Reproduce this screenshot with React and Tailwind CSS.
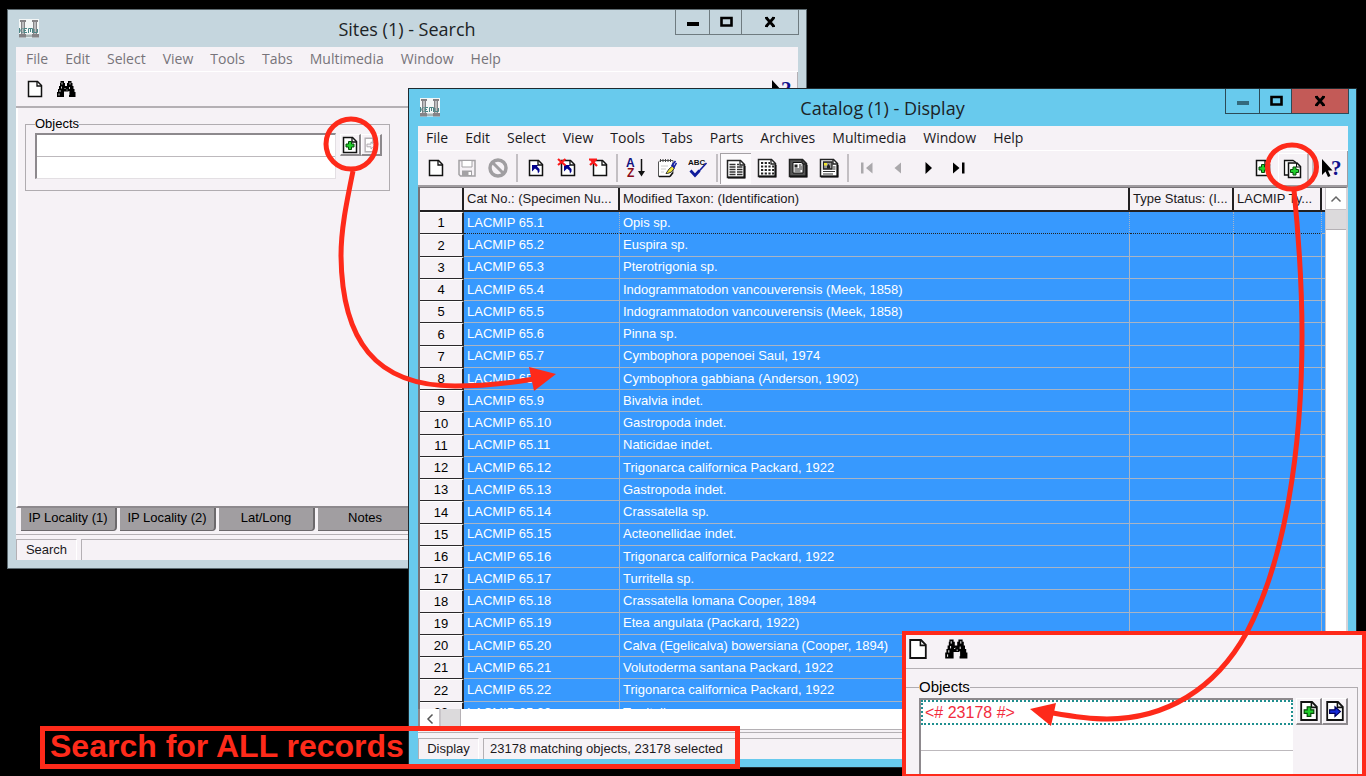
import React from 'react';

const records = [
  ['LACMIP 65.1', 'Opis sp.'],
  ['LACMIP 65.2', 'Euspira sp.'],
  ['LACMIP 65.3', 'Pterotrigonia sp.'],
  ['LACMIP 65.4', 'Indogrammatodon vancouverensis (Meek, 1858)'],
  ['LACMIP 65.5', 'Indogrammatodon vancouverensis (Meek, 1858)'],
  ['LACMIP 65.6', 'Pinna sp.'],
  ['LACMIP 65.7', 'Cymbophora popenoei Saul, 1974'],
  ['LACMIP 65.8', 'Cymbophora gabbiana (Anderson, 1902)'],
  ['LACMIP 65.9', 'Bivalvia indet.'],
  ['LACMIP 65.10', 'Gastropoda indet.'],
  ['LACMIP 65.11', 'Naticidae indet.'],
  ['LACMIP 65.12', 'Trigonarca californica Packard, 1922'],
  ['LACMIP 65.13', 'Gastropoda indet.'],
  ['LACMIP 65.14', 'Crassatella sp.'],
  ['LACMIP 65.15', 'Acteonellidae indet.'],
  ['LACMIP 65.16', 'Trigonarca californica Packard, 1922'],
  ['LACMIP 65.17', 'Turritella sp.'],
  ['LACMIP 65.18', 'Crassatella lomana Cooper, 1894'],
  ['LACMIP 65.19', 'Etea angulata (Packard, 1922)'],
  ['LACMIP 65.20', 'Calva (Egelicalva) bowersiana (Cooper, 1894)'],
  ['LACMIP 65.21', 'Volutoderma santana Packard, 1922'],
  ['LACMIP 65.22', 'Trigonarca californica Packard, 1922'],
  ['LACMIP 65.23', 'Turritella sp.'],
];

/* ---------- icons ---------- */

function Svg({ children, className = 'h-5 w-5', box = '0 0 20 20' }) {
  return (
    <svg className={`block shrink-0 ${className}`} viewBox={box} fill="none" aria-hidden="true">
      {children}
    </svg>
  );
}

const Sheet = ({ stroke = '#111' }) => (
  <>
    <path d="M3.5 2.5h9l4 4v11h-13z" fill="#fff" stroke={stroke} strokeWidth="1.5" />
    <path d="M12 2.5v4.500h4.500" stroke={stroke} strokeWidth="1.300" />
  </>
);

const NewIcon = ({ className }) => <Svg className={className}><Sheet /></Svg>;

const BinocularsIcon = ({ className }) => (
  <Svg className={className}>
    <path d="M4.500 2h3.500v2h1v3h2V4h1V2h3.500v2h1v3h1v3h1v3h1v5h-6.500v-5.500h-5V18H1v-5h1v-3h1V7h1V4h.5z" fill="#000" />
    <path d="M6 3.500v2M14 3.500v2M5.500 7.500v2M4 11v2M3 14.500v2M13.500 8v2M13 12v4M8.500 10l1-1M10.500 11h1" stroke="#fff" strokeWidth=".8" />
  </Svg>
);

const SaveIcon = () => (
  <Svg>
    <path d="M2 2.500h16v15.500H3.500L2 16.500z" stroke="#a3a1a4" strokeWidth="1.500" />
    <path d="M5 2.500h10v6.500H5z" fill="#fff" stroke="#a3a1a4" />
    <path d="M5 12.500h10V18H5z" fill="#a3a1a4" />
    <path d="M11.500 14h2.500v3h-2.500z" fill="#fff" />
  </Svg>
);

const BanIcon = () => (
  <Svg>
    <circle cx="10" cy="10" r="8" stroke="#a09ea1" strokeWidth="3.500" />
    <path d="M5 5l10 10" stroke="#a09ea1" strokeWidth="3" />
  </Svg>
);

const BlueArrow = () => (
  <path d="M6 7h6.500L11 8.500l2.500 2.500v2.500L12 15.500l-.5-3L9 10.500 6 13.500z" fill="#00008b" />
);
const RedCross = () => (
  <path d="M1 1l7.500 6.500M8.500 1L1 7" stroke="#fb1a1a" strokeWidth="2.200" />
);

const ViewAttachIcon = () => <Svg><Sheet /><BlueArrow /></Svg>;
const ClearAttachIcon = () => <Svg><g transform="translate(1)"><Sheet /><BlueArrow /></g><RedCross /></Svg>;
const DiscardIcon = () => (
  <Svg><g transform="translate(2)"><Sheet /></g><path d="M1 1.500h8M2 7l6-5.500M3 2l6 6" stroke="#fb1a1a" strokeWidth="2.200" /></Svg>
);

const SortIcon = () => (
  <Svg>
    <text x="0" y="9" fontSize="12" fontWeight="bold" fontFamily="Liberation Sans, sans-serif" fill="#101080">A</text>
    <text x="1" y="19" fontSize="12" fontWeight="bold" fontFamily="Liberation Sans, sans-serif" fill="#8b0a1a">Z</text>
    <path d="M15.500 1v14" stroke="#111" strokeWidth="1.500" />
    <path d="M12 13h7l-3.500 5.500z" fill="#111" />
  </Svg>
);

const NotesIcon = () => (
  <Svg>
    <path d="M3 2.500h13v12l-3.500 4H1.500V4z" fill="#fff" stroke="#555" />
    <path d="M2 18.500h11M13 18.500l3-4" stroke="#111" strokeWidth="1.500" />
    <path d="M3.500 1v3M6 1v3M8.500 1v3M11 1v3M13.500 1v3" stroke="#444" />
    <path d="M4 8h7M4 11h5M4 14h3" stroke="#ccc" />
    <path d="M9 15.500l3-4.500 3.500-3 2 2-3 4-4 1.500z" fill="#ede43a" stroke="#222" strokeWidth=".9" />
    <path d="M14.500 8l4-5M16.500 10l3-5M16 5v4" stroke="#1520a0" strokeWidth="1.500" />
  </Svg>
);

const SpellIcon = () => (
  <Svg>
    <text x="0" y="7" fontSize="8" fontWeight="bold" fontFamily="Liberation Sans, sans-serif" fill="#111">ABC</text>
    <path d="M7.500 17L18.500 5" stroke="#101c9c" strokeWidth="1.600" />
    <path d="M2.500 12.500l4.500 5L11.500 12.500" stroke="#101c9c" strokeWidth="2.800" />
  </Svg>
);

const PageFrame = ({ fill = '#fff' }) => (
  <>
    <path d="M1.500 1.500h13l4 4v13h-17z" fill={fill} stroke="#222" strokeWidth="1.500" />
    <path d="M14 1.500v4.500h4.500" stroke="#222" strokeWidth="1.300" />
    <path d="M2 18.500h16.500V7" stroke="#111" strokeWidth="2" />
  </>
);

const ListIcon = () => (
  <Svg>
    <PageFrame />
    <path d="M3.500 5.500h6M3.500 8h6M3.500 10.500h6M3.500 13h6M3.500 15.500h6M11 8h5.500M11 10.500h5.500M11 13h5.500M11 15.500h5.500M11 5.500h2" stroke="#333" strokeWidth="1.300" />
  </Svg>
);
const GridIcon = () => (
  <Svg>
    <PageFrame />
    <path d="M4 5h9M4 8.500h13M4 12h13M4 15.500h13" stroke="#222" strokeWidth="2.200" strokeDasharray="2.200 1.500" />
  </Svg>
);
const DetailIcon = () => (
  <Svg>
    <PageFrame fill="#555" />
    <path d="M5 4.500h8.500l1.500 2V15H5z" fill="#fff" stroke="#111" />
    <path d="M6.500 6.500h3v3h-3z" fill="#222" />
    <path d="M11 7h2.500M11 9h3M6.500 11h7.500M6.500 13h6" stroke="#222" />
  </Svg>
);
const ContactIcon = () => (
  <Svg>
    <PageFrame />
    <path d="M4.500 4h8.500v7H4.500z" fill="#999" stroke="#222" strokeWidth="1.300" />
    <path d="M5 5h3v2.500H5z" fill="#f2e62e" />
    <path d="M8 10.500V8l1.500-2L11 8v2.500z" fill="#222" />
    <path d="M14 9h2.500M14 11h2.500M4 13.500h12M4 16h10" stroke="#333" strokeWidth="1.200" />
  </Svg>
);

const FirstIcon = () => <Svg><path d="M4 4.500h2.500v11H4zM15.500 4.500v11L9 10z" fill="#aaa8ab" /></Svg>;
const PrevIcon = () => <Svg><path d="M13 4.500v11L6.500 10z" fill="#aaa8ab" /></Svg>;
const NextIcon = () => <Svg><path d="M6.500 4v12l6.500-6z" fill="#000" /></Svg>;
const LastIcon = () => <Svg><path d="M3 4.500v11l6.500-5.500zM12 4.500h2.500v11H12z" fill="#000" /></Svg>;

const Plus = ({ fill = '#21cf2b' }) => (
  <path d="M8.500 6.500h3V9H14v3h-2.500v2.500h-3V12H6V9h2.500z" fill={fill} stroke="#064a0a" strokeWidth="1" />
);
const AttachIcon = ({ className }) => <Svg className={className}><Sheet /><Plus /></Svg>;
const AttachAllIcon = () => (
  <Svg>
    <path d="M5 16H1.500V1.500h8.500l3 2" fill="#fff" stroke="#111" strokeWidth="1.300" />
    <path d="M5.500 4h8.500l3.500 3.500v11h-12z" fill="#fff" stroke="#111" strokeWidth="1.500" />
    <path d="M13.500 4v4h4" stroke="#111" />
    <g transform="translate(1.500 1.500)"><Plus /></g>
  </Svg>
);
const ArrowDocIcon = ({ className, muted }) => (
  <Svg className={className}>
    <Sheet stroke={muted ? '#b3afb3' : '#111'} />
    <path
      d="M5.500 9H10V6.500l4.500 4-4.500 4V12H5.500z"
      fill={muted ? '#f6f2f6' : '#1428d8'}
      stroke={muted ? '#aaa6aa' : '#00005a'}
      strokeWidth="1"
    />
  </Svg>
);

const HelpIcon = () => (
  <Svg className="h-5 w-6" box="0 0 24 20">
    <path d="M2 1v16l3.500-3.500L8 19l2.500-1L8 12.500h4.500z" fill="#000" />
    <text x="11" y="17" fontSize="21" fontWeight="bold" fontFamily="Liberation Serif, serif" fill="#10108c">?</text>
  </Svg>
);

const MuseumIcon = () => (
  <Svg>
    <path d="M0 0h20v18.500H0z" fill="#f4f7f7" />
    <path d="M1 1h6v2H1zM13 1h6v2h-6zM2 3h1.500v12H2zM4.500 3H6v12H4.500zM14 3h1.500v12H14zM16.500 3H18v12h-1.500zM0 15h7v3.500H0zM13 15h7v3.500h-7z" fill="#858386" />
    <path d="M7 15.500h6V18H7z" fill="#a9b3b3" />
    <path d="M.5 9v5M1 11.500l2.500-2M1 11.500l2.500 2.500M5 9.500h3M5 11.500h2M5 13.500h3M5 9v5M9.500 14V9.500h4V14M11.500 10v3M15 10v3.500h3.500V10" stroke="#4b8585" strokeWidth="1" />
  </Svg>
);

/* ---------- window parts ---------- */

function ControlButton({ label, className, children }) {
  return (
    <button aria-label={label} className={`flex h-[25px] items-center justify-center border-r border-b border-l-0 ${className}`}>
      {children}
    </button>
  );
}

function TitleBar({ title, active }) {
  const line = active ? 'border-[#2c4a57]' : 'border-[#6f7b80]';
  return (
    <header className="grid h-[37px] grid-cols-[1fr_auto_1fr] items-center">
      <span className="pl-[11px]"><MuseumIcon /></span>
      <h1 className="font-['Open_Sans',sans-serif] text-[18px] leading-6 text-[#1c2326]">{title}</h1>
      <div className={`mr-[7px] flex self-start justify-self-end border-l ${line}`}>
        <ControlButton label="Minimize" className={`w-[34px] ${line}`}>
          <Svg className="h-4 w-4" box="0 0 16 16"><path d="M2 8h12v4H2z" fill={active ? '#33697c' : '#000'} /></Svg>
        </ControlButton>
        <ControlButton label="Maximize" className={`w-8 ${line}`}>
          <Svg className="h-4 w-4" box="0 0 16 16"><path d="M3.500 4h10v7.500h-10z" stroke="#000" strokeWidth="2.600" /></Svg>
        </ControlButton>
        <ControlButton label="Close" className={`w-[57px] ${line} ${active ? 'bg-[#c35a57]' : ''}`}>
          <Svg className="h-4 w-4" box="0 0 16 16"><path d="M4 3.500l8 9M12 3.500l-8 9" stroke="#000" strokeWidth="2.800" /><path d="M3 3.500h3M10 3.500h3M3 12.500h3M10 12.500h3" stroke="#000" /></Svg>
        </ControlButton>
      </div>
    </header>
  );
}

function MenuBar({ items, muted }) {
  return (
    <nav className={`flex h-[25px] items-center gap-[17px] border-b border-white font-['Open_Sans',sans-serif] text-[14px] leading-5 ${muted ? 'pl-[10px] text-[#77747a]' : 'pl-2 text-[#1b191c]'}`}>
      {items.map((item) => <button key={item}>{item}</button>)}
    </nav>
  );
}

function Tool({ label, pressed, raised, children }) {
  return (
    <button
      aria-label={label}
      className={`flex h-[31px] w-[31px] items-center justify-center ${pressed ? 'border-t border-l border-[#a5a1a5] bg-[#fcfafc]' : ''} ${raised ? 'border-t border-l border-t-white border-l-white border-r-2 border-r-[#b5b1b5]' : ''}`}
    >
      {children}
    </button>
  );
}

const Separator = () => (
  <span className="flex w-[7px] justify-center"><span className="h-7 w-[2px] bg-[#c3bfc3]" /></span>
);

function Bevel({ label, className, children }) {
  return (
    <button
      aria-label={label}
      className={`flex items-center justify-center border-t border-l border-r-2 border-b-2 border-t-white border-l-white border-r-[#8d898d] border-b-[#8d898d] bg-[#f6f2f6] ${className}`}
    >
      {children}
    </button>
  );
}

function StatusBar({ first, second }) {
  return (
    <footer className="flex h-[21px] gap-1 leading-5">
      <div className="w-[61px] border-t border-l border-[#b4b0b4] border-r border-r-white text-center">{first}</div>
      <div className="flex-1 border-t border-l border-[#b4b0b4] pl-[6px]">{second}</div>
    </footer>
  );
}

function SitesWindow() {
  return (
    <section className="absolute top-[9px] left-[7px] flex h-[560px] w-[800px] flex-col border border-[#5d6a70] bg-[#c5d6de]">
      <TitleBar title="Sites (1) - Search" />
      <div className="mx-2 mb-2 flex flex-1 flex-col bg-[#f6f2f6]">
        <MenuBar muted items={['File', 'Edit', 'Select', 'View', 'Tools', 'Tabs', 'Multimedia', 'Window', 'Help']} />
        <div className="flex h-9 items-center border-r border-b-2 border-[#b4b0b4] pl-[3px]">
          <Tool label="New"><NewIcon /></Tool>
          <Tool label="Search"><BinocularsIcon /></Tool>
          <span className="ml-auto"><Tool label="Help"><HelpIcon /></Tool></span>
        </div>
        <div className="flex-1 border-b-2 border-l-2 border-b-[#8d898d] border-l-white px-[7px] pt-2">
          <fieldset className="flex h-[75px] w-[365px] gap-1 border border-[#b0acb0] pt-px pl-[9px]">
            <legend className="leading-4 text-black">Objects</legend>
            <div className="h-[46px] w-[301px] border-t-2 border-l-2 border-t-[#8d898d] border-l-[#8d898d] border-r border-b border-r-[#e3dfe3] border-b-[#e3dfe3] bg-white">
              <input aria-label="Objects row 1" className="block h-[22px] w-full border-b border-[#bdb9bd] bg-white outline-none" />
              <input aria-label="Objects row 2" className="block h-[21px] w-full bg-white outline-none" />
            </div>
            <div className="flex pt-px">
              <Bevel label="Attach" className="h-[22px] w-[21px]"><AttachIcon className="h-5 w-5" /></Bevel>
              <Bevel label="View attachments" className="h-[22px] w-[21px]"><ArrowDocIcon muted className="h-[18px] w-[18px]" /></Bevel>
            </div>
          </fieldset>
        </div>
        <div className="flex h-[27px] gap-[3px] border-b border-[#b4b0b4] pl-[5px]">
          {['IP Locality (1)', 'IP Locality (2)', 'Lat/Long', 'Notes'].map((tab) => (
            <button key={tab} className="h-[23px] w-24 rounded-br-[4px] border-r-2 border-b border-[#6c696c] bg-[#a19ea1] pb-[2px] leading-5 text-black">
              {tab}
            </button>
          ))}
        </div>
        <div className="mt-1"><StatusBar first="Search" second="" /></div>
      </div>
    </section>
  );
}

function CatalogWindow() {
  const head = "overflow-hidden border-r-2 border-b-2 border-[#222022] p-0 pl-[3px] text-left font-normal whitespace-nowrap";
  const cell = 'border-r border-b border-[#a9b4c4] p-0 pl-[3px] overflow-hidden whitespace-nowrap';
  return (
    <section className="absolute top-[88px] right-[9px] left-[408px] flex h-[680px] flex-col border border-[#1f2a2f] bg-[#68caed]">
      <TitleBar title="Catalog (1) - Display" active />
      <div className="mr-2 mb-2 ml-[9px] flex min-h-0 flex-1 flex-col bg-[#f6f2f6]">
        <MenuBar items={['File', 'Edit', 'Select', 'View', 'Tools', 'Tabs', 'Parts', 'Archives', 'Multimedia', 'Window', 'Help']} />
        <div className="flex h-9 items-center border-r border-b-2 border-[#a09ca0] pl-[2px]">
          <Tool label="New"><NewIcon /></Tool>
          <Tool label="Save"><SaveIcon /></Tool>
          <Tool label="Cancel"><BanIcon /></Tool>
          <Separator />
          <Tool label="View attachments"><ViewAttachIcon /></Tool>
          <Tool label="Clear attachments"><ClearAttachIcon /></Tool>
          <Tool label="Discard"><DiscardIcon /></Tool>
          <Separator />
          <Tool label="Sort"><SortIcon /></Tool>
          <Tool label="Edit notes"><NotesIcon /></Tool>
          <Tool label="Spelling"><SpellIcon /></Tool>
          <Separator />
          <Tool label="List view" pressed><ListIcon /></Tool>
          <Tool label="Grid view"><GridIcon /></Tool>
          <Tool label="Details view"><DetailIcon /></Tool>
          <Tool label="Contact sheet"><ContactIcon /></Tool>
          <Separator />
          <Tool label="First"><FirstIcon /></Tool>
          <Tool label="Previous"><PrevIcon /></Tool>
          <Tool label="Next"><NextIcon /></Tool>
          <Tool label="Last"><LastIcon /></Tool>
          <div className="ml-auto flex items-center">
            <Tool label="Attach current"><AttachIcon /></Tool>
            <Tool label="Attach all" raised><AttachAllIcon /></Tool>
            <Separator />
            <Tool label="Help"><HelpIcon /></Tool>
          </div>
        </div>
        <div className="flex h-[522px] border-t border-l-2 border-[#777377] border-r-2 border-r-[#d8d4d8]">
          <div className="flex-1 overflow-hidden">
            <table className="h-[536px] w-full table-fixed border-separate border-spacing-0">
              <colgroup>
                <col className="w-[44px]" />
                <col className="w-[156px]" />
                <col />
                <col className="w-[104px]" />
                <col className="w-[88px]" />
                <col className="w-[3px]" />
              </colgroup>
              <thead>
                <tr className="h-6">
                  <th className={head} aria-label="Row" />
                  <th scope="col" className={head}>Cat No.: (Specimen Nu...</th>
                  <th scope="col" className={head}>Modified Taxon: (Identification)</th>
                  <th scope="col" className={head}>Type Status: (I...</th>
                  <th scope="col" className={head}>LACMIP Ty...</th>
                  <th className="border-b-2 border-[#222022] p-0" aria-label="Filler" />
                </tr>
              </thead>
              <tbody>
                {records.map(([cat, taxon], i) => {
                  const focus = i === 0 ? 'border-b border-dotted border-b-[#222]' : '';
                  return (
                    <tr key={cat} className="h-[22px] text-white">
                      <th scope="row" className="border-t border-r-2 border-b border-t-white border-r-[#2a282a] border-b-[#2a282a] bg-[#f6f2f6] p-0 font-normal text-black">{i + 1}</th>
                      <td className={`${cell} bg-[#3799fe] ${focus}`}>{cat}</td>
                      <td className={`${cell} bg-[#3799fe] ${focus}`}>{taxon}</td>
                      <td className={`${cell} bg-[#3799fe] ${focus}`} />
                      <td className={`${cell} bg-[#3799fe] ${focus}`} />
                      <td className="border-b border-[#a9b4c4] bg-[#3799fe] p-0" />
                    </tr>
                  );
                })}
              </tbody>
            </table>
          </div>
          <div className="flex w-[21px] flex-col border-l border-[#c9c5c9] bg-white">
            <button aria-label="Scroll up" className="flex h-[22px] items-center justify-center border-b border-[#c9c5c9]">
              <Svg className="h-3 w-3" box="0 0 12 12"><path d="M1.500 8.500L6 4l4.500 4.500" stroke="#666" strokeWidth="1.500" /></Svg>
            </button>
            <div className="h-5 border-b border-[#b5b1b5] bg-[#dcdadc]" />
          </div>
        </div>
        <div className="flex h-5 border-l-2 border-[#8d898d] bg-white">
          <button aria-label="Scroll left" className="flex w-[21px] items-center justify-center border-r-2 border-[#c9c5c9]">
            <Svg className="h-3 w-3" box="0 0 12 12"><path d="M8.500 1.500L4 6l4.500 4.500" stroke="#555" strokeWidth="1.500" /></Svg>
          </button>
          <div className="w-5 border-r border-[#b5b1b5] bg-[#dcdadc]" />
        </div>
        <div className="h-1 border-y border-[#b4b0b4]" />
        <div className="mt-auto"><StatusBar first="Display" second="23178 matching objects, 23178 selected" /></div>
      </div>
    </section>
  );
}

function InsetPanel() {
  return (
    <section className="absolute top-[631px] right-0 h-[147px] w-[464px] overflow-hidden border-4 border-[#fe2a1a] bg-[#f6f2f6] text-[15px]">
      <div className="flex h-[34px] items-start gap-[14px] border-b border-[#b4b0b4] pt-[2px]">
        <button aria-label="New record"><NewIcon className="h-6 w-6" /></button>
        <button aria-label="Find"><BinocularsIcon className="h-6 w-6" /></button>
      </div>
      <fieldset className="mt-2 mr-1 flex h-[120px] justify-between border-t border-r border-[#b0acb0] pt-px pr-[9px] pl-[13px]">
        <legend className="leading-5 text-black">Objects</legend>
        <div className="h-[100px] w-[374px] border-t-2 border-l-2 border-[#8d898d] bg-white">
          <input
            aria-label="Objects query"
            defaultValue="<# 23178 #>"
            className="block h-[25px] w-full border-2 border-dotted border-[#1f8f8f] bg-white px-[2px] text-[16px] leading-5 text-[#f22c3c] outline-none"
          />
          <input aria-label="Objects query 2" className="block h-[26px] w-full border-b border-[#bdb9bd] bg-white outline-none" />
          <input aria-label="Objects query 3" className="block h-[26px] w-full bg-white outline-none" />
        </div>
        <div className="flex">
          <Bevel label="Attach" className="h-[27px] w-[26px]"><AttachIcon className="h-6 w-6" /></Bevel>
          <Bevel label="View attachments" className="h-[27px] w-[26px]"><ArrowDocIcon className="h-6 w-6" /></Bevel>
        </div>
      </fieldset>
    </section>
  );
}

export default function App() {
  return (
    <main className="relative min-h-screen overflow-hidden bg-black font-['Liberation_Sans',Arial,sans-serif] text-[13px] text-[#1b191c]">
      <SitesWindow />
      <CatalogWindow />
      <InsetPanel />

      <div className="absolute top-[726px] left-[40px] flex h-[43px] w-[700px] items-center border-[5px] border-[#fe2a1a] pb-1 pl-[5px]">
        <strong className="text-[32px] leading-8 whitespace-nowrap text-[#fe2a1a]">Search for ALL records</strong>
      </div>

      <svg className="pointer-events-none absolute top-0 left-0 h-[420px] w-[600px]" viewBox="0 0 600 420" fill="none" aria-hidden="true">
        <circle cx="351" cy="144" r="25" stroke="#fe2a1a" strokeWidth="5" />
        <path d="M353 171C346 205 341 230 341 256C342 340 375 386 455 386C485 386 510 383 534 379" stroke="#fe2a1a" strokeWidth="5" />
        <path d="M529 367L556 374L534 391z" fill="#fe2a1a" />
      </svg>
      <svg className="pointer-events-none absolute top-0 right-0 h-[776px] w-[366px]" viewBox="1000 0 366 776" fill="none" aria-hidden="true">
        <ellipse cx="1292" cy="167" rx="24.500" ry="22" stroke="#fe2a1a" strokeWidth="5" />
        <path d="M1294 190C1298 230 1302 290 1302 335C1302 450 1285 560 1247 632C1215 690 1165 719 1107 719C1088 719 1070 716 1053 713" stroke="#fe2a1a" strokeWidth="5" />
        <path d="M1030 709L1056 703L1051 726z" fill="#fe2a1a" />
      </svg>
    </main>
  );
}
